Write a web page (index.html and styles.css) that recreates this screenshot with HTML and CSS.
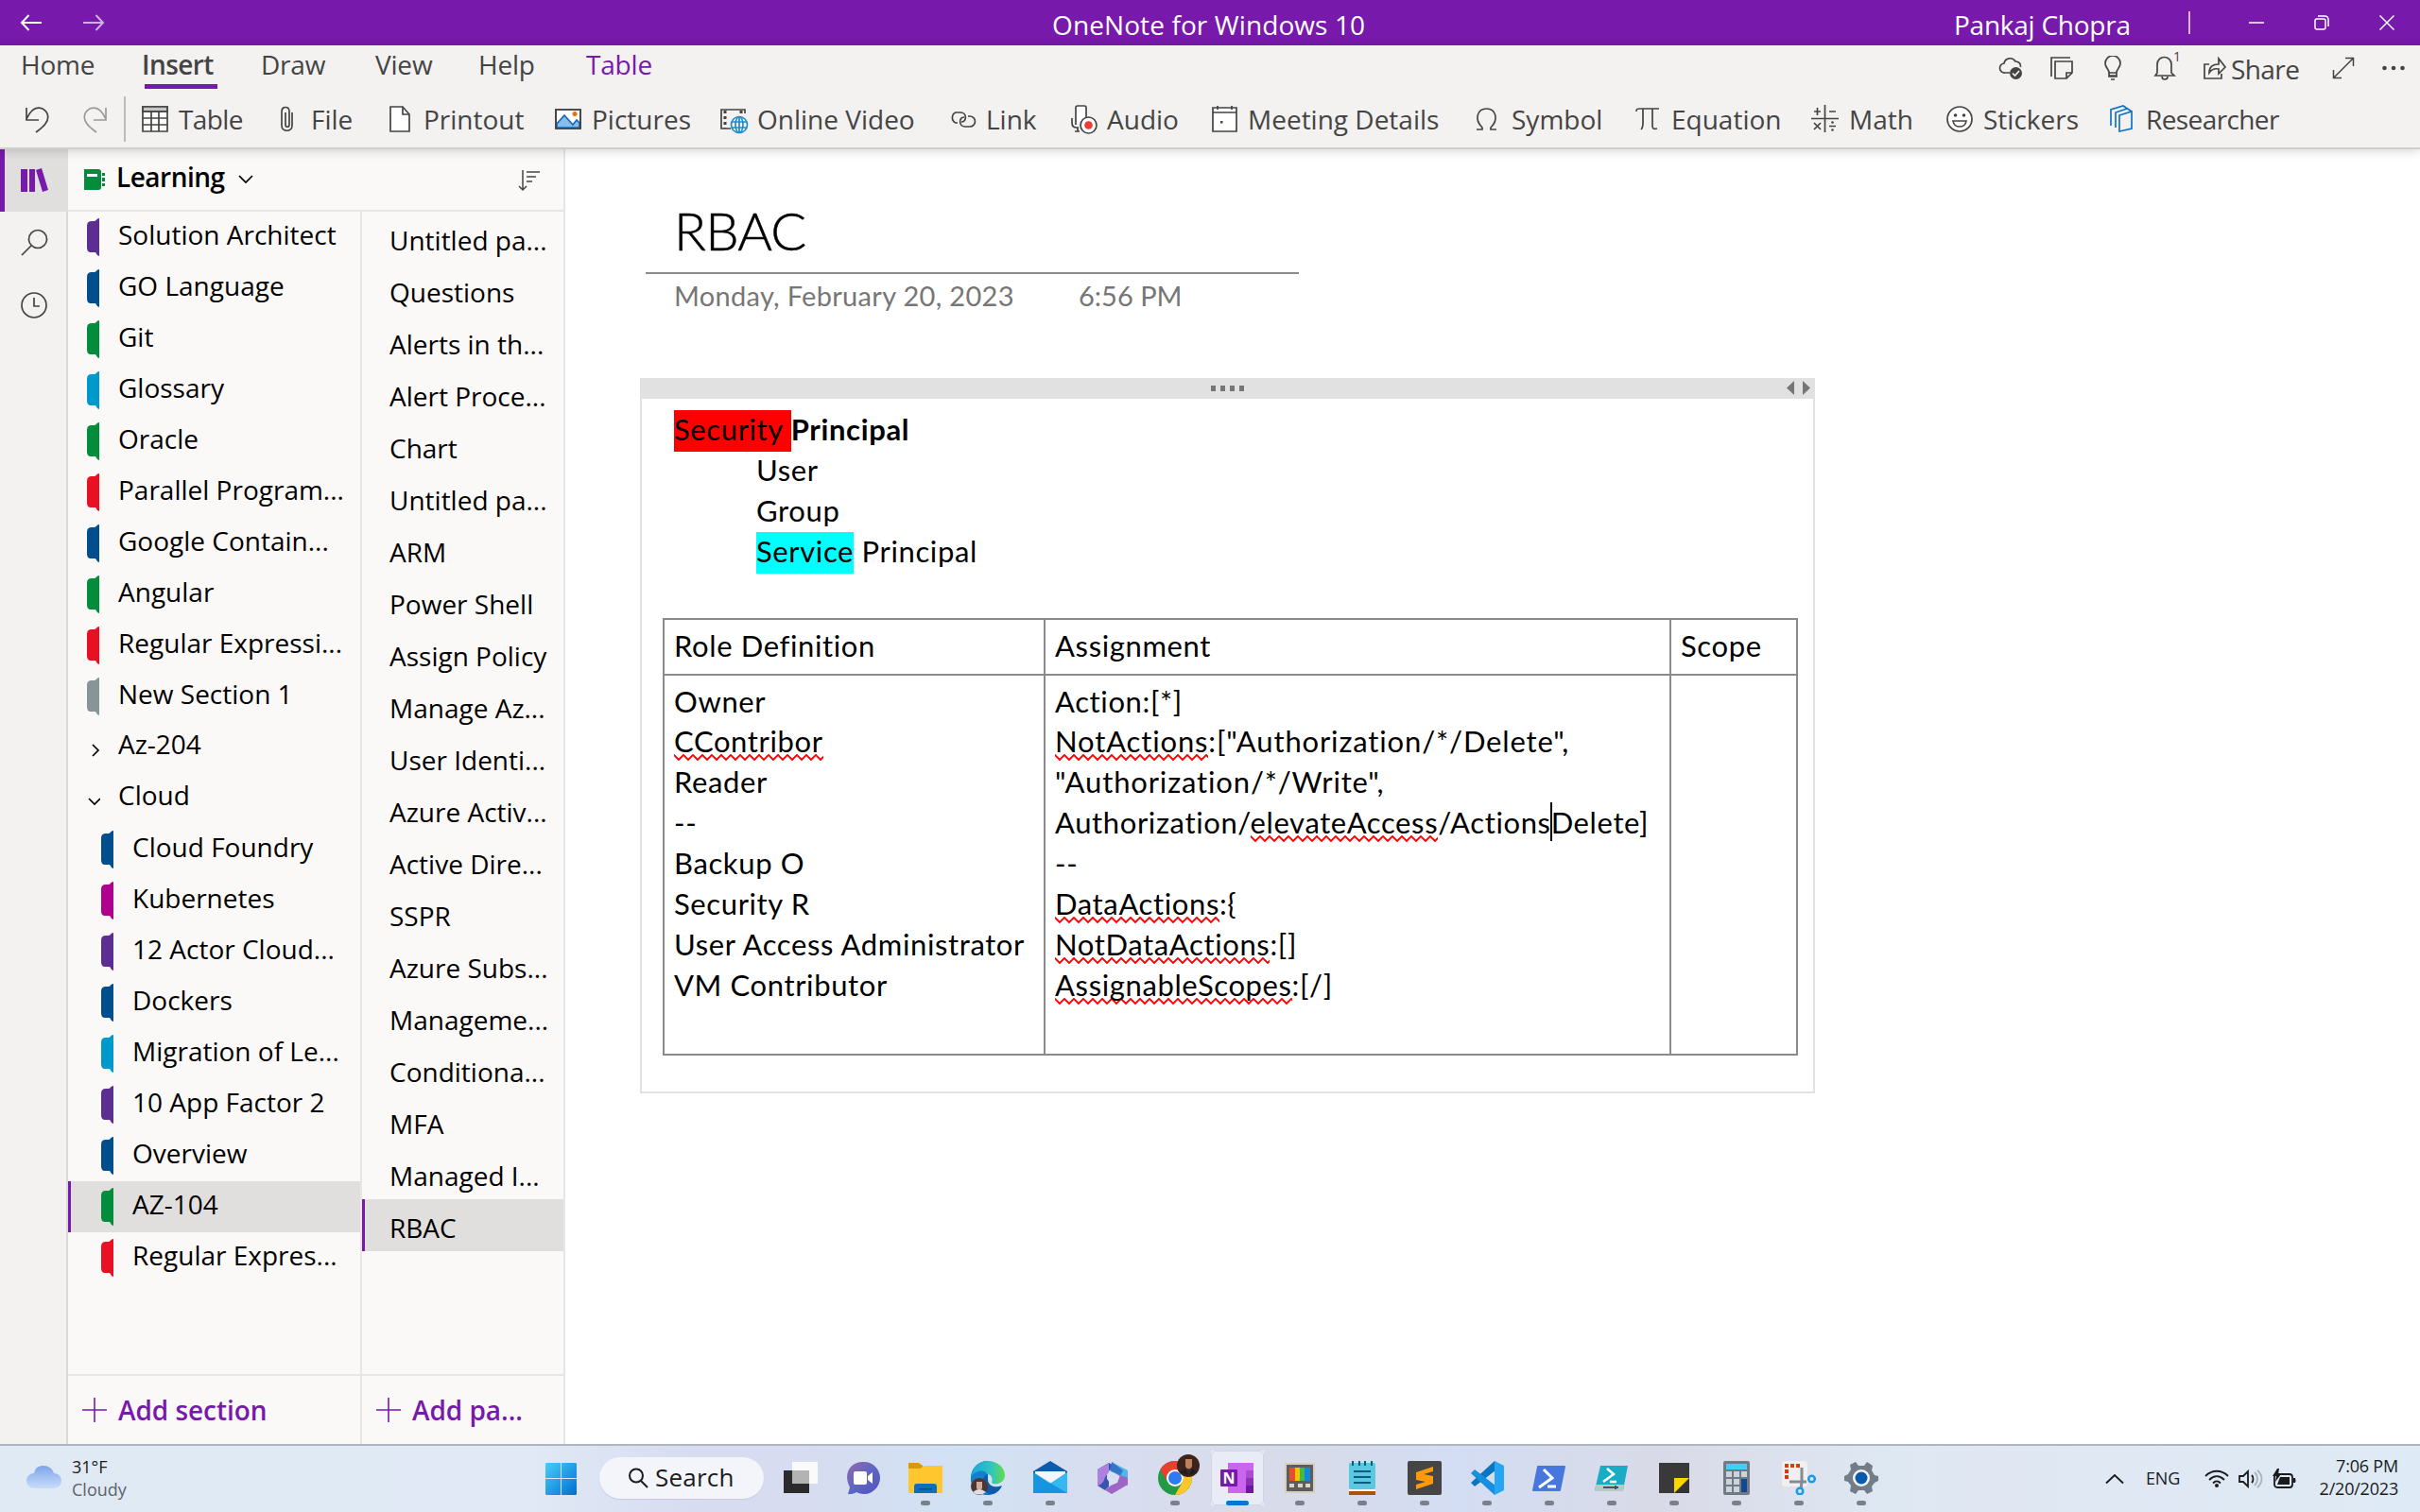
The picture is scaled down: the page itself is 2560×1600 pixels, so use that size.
FILE: index.html
```html
<!DOCTYPE html>
<html lang="en">
<head>
<meta charset="utf-8">
<title>OneNote for Windows 10</title>
<link rel="stylesheet" href="styles.css">
</head>
<body>
<header class="titlebar">
  <nav class="history">
    <svg class="i24" viewBox="0 0 24 24"><path d="M23 12H2M9.500 4 2 12l7.500 8"/></svg>
    <svg class="i24 dim" viewBox="0 0 24 24"><path d="M1 12h21M14.500 4l7.500 8-7.500 8"/></svg>
  </nav>
  <div class="app-title">OneNote for Windows 10</div>
  <div class="account">Pankaj Chopra</div>
  <div class="divider"></div>
  <div class="window-buttons">
    <svg viewBox="0 0 16 16"><path d="M0 8h16"/></svg>
    <svg viewBox="0 0 16 16"><rect x="1" y="4" width="11" height="11" rx="2"/><path d="M4 1h7.500a3.500 3.500 0 0 1 3.500 3.500V12"/></svg>
    <svg viewBox="0 0 16 16"><path d="M.5.5l15 15M15.500.5l-15 15"/></svg>
  </div>
</header>

<section class="ribbon">
  <div class="tab-row">
    <nav class="tabs">
      <span>Home</span><span class="current">Insert</span><span>Draw</span><span>View</span><span>Help</span><span class="context">Table</span>
    </nav>
    <div class="quick">
      <svg class="q-cloud" viewBox="0 0 26 26"><path d="M12 18H7a5 5 0 0 1-1-10 6.500 6.500 0 0 1 12-2c4 0 6 3 5.500 6"/><circle cx="18.500" cy="18.500" r="6.500" class="solid"/><path class="tick" d="M15 18.500l2.500 2.500 4.500-5"/></svg>
      <svg class="q-note" viewBox="0 0 26 26"><path d="M2 22V2h20M6 6h18v12l-6 6H6zM18 24v-6h6"/></svg>
      <svg class="q-bulb" viewBox="0 0 26 26"><path d="M9 18c0-4-4-5-4-10a8 8 0 0 1 16 0c0 5-4 6-4 10zM9 21h8M11 25h4M9 18v4h8v-4"/></svg>
      <svg class="q-bell" viewBox="0 0 26 26"><path d="M3 21l2-3V9a7.500 7.500 0 0 1 15 0v9l3 3zM10 22a3 3 0 0 0 6 0"/></svg><sup>1</sup>
      <svg class="q-share" viewBox="0 0 26 26"><path d="M7 9H2v15h18v-5M7 18c0-6 4-9 10-9V3l7 9-7 7v-5c-5-1-8 1-10 4z"/></svg>
      <span class="share">Share</span>
      <svg class="q-expand" viewBox="0 0 26 26"><path d="M3 23L23 3M15 2.500h8.500V11M2.500 15v8.500H11" stroke-width="1.500"/></svg>
      <svg class="q-more" viewBox="0 0 26 26"><g class="solid"><circle cx="3.500" cy="13" r="2.300"/><circle cx="13" cy="13" r="2.300"/><circle cx="22.500" cy="13" r="2.300"/></g></svg>
    </div>
  </div>
  <div class="tools">
    <svg class="undo" viewBox="0 0 32 32"><path d="M5 4v13h13M5 16C9 7 15 2 22 5c7 4 7 11 3 16-3 4-6 6-10 9"/></svg>
    <svg class="undo redo" viewBox="0 0 32 32"><path d="M27 4v13H14M27 16C23 7 17 2 10 5c-7 4-7 11-3 16 3 4 6 6 10 9"/></svg>
    <i class="tool-divider"></i>
    <span class="tool tight"><svg viewBox="0 0 32 32"><path fill="#fff" d="M3 3h26v26H3z"/><path fill="#c8c6c4" d="M3 3h26v5H3z"/><path d="M3 8h26M3 15h26M3 22h26M12 8v21M20 8v21"/></svg>Table</span>
    <span class="tool"><svg viewBox="0 0 32 32"><path d="M21 9v14c0 7-11 7-11 0V8c0-6 8-6 8 0v14c0 3-4 3-4 0V9"/></svg>File</span>
    <span class="tool"><svg viewBox="0 0 32 32"><path fill="#fff" d="M6 3h13l7 8v18H6z"/><path d="M19 3v8h7"/></svg>Printout</span>
    <span class="tool"><svg viewBox="0 0 32 32"><path fill="#fff" d="M3 6h26v20H3z"/><path d="M4 21l8-9 9 10 4-5 3 3v5H4z" fill="#83beec" stroke="#1568b8"/><circle cx="23" cy="10.500" r="2.500" fill="#e8710a" stroke="none"/><path d="M3 6h26v20H3z"/></svg>Pictures</span>
    <span class="tool"><svg viewBox="0 0 32 32"><path d="M28 10V6H3v20h10"/><path d="M7 7v19M24 7v4" stroke-dasharray="3 3" stroke-width="3"/><g stroke="#1e8bcd"><circle cx="22" cy="22" r="8.500" fill="#fff"/><ellipse cx="22" cy="22" rx="4" ry="8.500"/><path d="M22 13v18M14 19h16M14 25h16"/></g></svg>Online Video</span>
    <span class="tool"><svg viewBox="0 0 32 32"><path d="M11 20H9A6 6 0 0 1 9 9h5c7 0 7 10 1 10M22 13h2a5.500 5.500 0 0 1 0 11h-5c-7 0-7-10-1-10"/></svg>Link</span>
    <span class="tool"><svg viewBox="0 0 32 32"><path fill="#fff" d="M8 22V4c0-1 1-2 2-2h7c1 0 2 1 2 2v10"/><path d="M4 15v5c0 3 2 5 5 5h2M10 25v4M7 29h5"/><circle cx="21.500" cy="22.500" r="8.500" fill="#fff"/><circle cx="21.500" cy="22.500" r="4.300" fill="#f03a32" stroke="none"/></svg>Audio</span>
    <span class="tool"><svg viewBox="0 0 32 32"><path fill="#fff" d="M4 4h25v25H4z"/><path d="M4 9h25M9 2v4M24 2v4"/><path class="solid" d="M12 18h2.500v2.500H12z"/></svg>Meeting Details</span>
    <span class="tool"><svg viewBox="0 0 32 32"><path d="M4 27h6v-2C1 16 5 5 14.500 5S28 16 19 25v2h6"/></svg>Symbol</span>
    <span class="tool"><svg viewBox="0 0 32 32"><path d="M4 8c0-3 1-3 4-3h20M11 5v15c0 4-1 6-2 7M21 5v18c0 3 1 4 5 3"/></svg>Equation</span>
    <span class="tool"><svg viewBox="0 0 32 32"><path d="M15.500 1v29M1 15.500h29M7.500 4v8M4 8h7M20 8h7M4 20l7 7M11 20l-7 7M20 23.500h7"/><g class="solid"><circle cx="23.500" cy="19.500" r="1.300"/><circle cx="23.500" cy="27.500" r="1.300"/></g></svg>Math</span>
    <span class="tool"><svg viewBox="0 0 32 32"><circle cx="16" cy="16" r="13" fill="#fff"/><path d="M9 18h14c-1 8-13 8-14 0z"/><g class="solid"><circle cx="11.500" cy="12" r="1.800"/><circle cx="20.500" cy="12" r="1.800"/></g></svg>Stickers</span>
    <span class="tool tight"><svg viewBox="0 0 32 32" class="blue"><path d="M13 12l13-4v18l-13 3zM9 25V9l12-4M4 23V6l13-4 9 6"/></svg>Researcher</span>
  </div>
</section>

<main class="workspace">
  <aside class="rail">
    <div class="rail-item active"><svg viewBox="0 0 32 32"><path class="fill" d="M2 4h7v24H2zM11 4h6v24h-6zM18 5l6-2 7 23-6 2z"/></svg></div>
    <div class="rail-item"><svg viewBox="0 0 32 32"><circle cx="20" cy="12" r="9.500"/><path d="M13 19L3 29"/></svg></div>
    <div class="rail-item"><svg viewBox="0 0 32 32"><circle cx="16" cy="16" r="13"/><path d="M16 8v9h6"/></svg></div>
  </aside>
  <section class="navigator">
    <header class="notebook">
      <svg class="nb" viewBox="0 0 24 24"><path fill="#038c3c" d="M1 1h15q3 0 3 3v16q0 3-3 3H1z"/><path fill="#fff" d="M4 6h11v3H4z"/><path fill="#038c3c" d="M20 5h3v3h-3zM20 10h3v4h-3zM20 16h3v3h-3z"/></svg>
      <b>Learning</b>
      <svg class="chev" viewBox="0 0 16 10"><path d="M1 1l7 7 7-7"/></svg>
      <svg class="sort" viewBox="0 0 24 24"><path d="M5 1v21M1 18l4 4 4-4M9 3h14M9 8h10M9 13h6" stroke-width="1.500"/></svg>
    </header>
    <div class="lists">
      <div class="sections">
        <ul>
          <li class="purple"><svg viewBox="0 0 14 40"><use href="#tab"/></svg>Solution Architect</li>
          <li class="navy"><svg viewBox="0 0 14 40"><use href="#tab"/></svg>GO Language</li>
          <li class="green"><svg viewBox="0 0 14 40"><use href="#tab"/></svg>Git</li>
          <li class="cyan"><svg viewBox="0 0 14 40"><use href="#tab"/></svg>Glossary</li>
          <li class="green"><svg viewBox="0 0 14 40"><use href="#tab"/></svg>Oracle</li>
          <li class="red"><svg viewBox="0 0 14 40"><use href="#tab"/></svg>Parallel Program...</li>
          <li class="navy"><svg viewBox="0 0 14 40"><use href="#tab"/></svg>Google Contain...</li>
          <li class="green"><svg viewBox="0 0 14 40"><use href="#tab"/></svg>Angular</li>
          <li class="red"><svg viewBox="0 0 14 40"><use href="#tab"/></svg>Regular Expressi...</li>
          <li class="grey"><svg viewBox="0 0 14 40"><use href="#tab"/></svg>New Section 1</li>
          <li class="group"><svg viewBox="0 0 14 40"><path d="M6 18l6 6-6 6"/></svg>Az-204</li>
          <li class="group"><svg viewBox="0 0 14 40"><path d="M2 21l6 6 6-6"/></svg>Cloud</li>
          <li class="child navy"><svg viewBox="0 0 14 40"><use href="#tab"/></svg>Cloud Foundry</li>
          <li class="child magenta"><svg viewBox="0 0 14 40"><use href="#tab"/></svg>Kubernetes</li>
          <li class="child purple"><svg viewBox="0 0 14 40"><use href="#tab"/></svg>12 Actor Cloud...</li>
          <li class="child navy"><svg viewBox="0 0 14 40"><use href="#tab"/></svg>Dockers</li>
          <li class="child cyan"><svg viewBox="0 0 14 40"><use href="#tab"/></svg>Migration of Le...</li>
          <li class="child purple"><svg viewBox="0 0 14 40"><use href="#tab"/></svg>10 App Factor 2</li>
          <li class="child navy"><svg viewBox="0 0 14 40"><use href="#tab"/></svg>Overview</li>
          <li class="child green selected"><svg viewBox="0 0 14 40"><use href="#tab"/></svg>AZ-104</li>
          <li class="child red"><svg viewBox="0 0 14 40"><use href="#tab"/></svg>Regular Expres...</li>
        </ul>
        <div class="add"><svg viewBox="0 0 26 26"><path d="M13 0v26M0 13h26"/></svg>Add section</div>
      </div>
      <div class="pages">
        <ul>
          <li>Untitled pa...</li><li>Questions</li><li>Alerts in th...</li><li>Alert Proce...</li><li>Chart</li><li>Untitled pa...</li><li>ARM</li><li>Power Shell</li><li>Assign Policy</li><li>Manage Az...</li><li>User Identi...</li><li>Azure Activ...</li><li>Active Dire...</li><li>SSPR</li><li>Azure Subs...</li><li>Manageme...</li><li>Conditiona...</li><li>MFA</li><li>Managed I...</li><li class="selected">RBAC</li>
        </ul>
        <div class="add"><svg viewBox="0 0 26 26"><path d="M13 0v26M0 13h26"/></svg>Add pa...</div>
      </div>
    </div>
  </section>
  <article class="page">
    <h1>RBAC</h1>
    <p class="stamp"><span>Monday, February 20, 2023</span><span>6:56 PM</span></p>
    <div class="note">
      <div class="grip">
        <svg class="dots" viewBox="0 0 36 6"><path d="M0 0h5v6H0zM10 0h5v6h-5zM20 0h5v6h-5zM30 0h5v6h-5z"/></svg>
        <svg class="arrows" viewBox="0 0 24 16"><path d="M8 0v15L0 7.500zM17 0v15l8-7.500z"/></svg>
      </div>
      <div class="note-body">
        <p><span class="hl-red">Security </span><strong>Principal</strong></p>
        <p class="indent">User</p>
        <p class="indent">Group</p>
        <p class="indent"><span class="hl-cyan">Service</span> Principal</p>
        <div class="grid">
          <div>Role Definition</div>
          <div>Assignment</div>
          <div>Scope</div>
          <div>
            <p>Owner</p><p><u>CContribor</u></p><p>Reader</p><p>--</p><p>Backup O</p><p>Security R</p><p>User Access Administrator</p><p>VM Contributor</p>
          </div>
          <div>
            <p>Action:[*]</p><p class="wide"><u>NotActions</u>:["Authorization/*/Delete",</p><p class="wide">"Authorization/*/Write",</p><p>Authorization/<u>elevateAccess</u>/Actions<i class="caret"></i>Delete]</p><p>--</p><p><u>DataActions</u>:{</p><p><u>NotDataActions</u>:[]</p><p><u>AssignableScopes</u>:[/]</p>
          </div>
          <div></div>
        </div>
      </div>
    </div>
  </article>
</main>

<footer class="taskbar">
  <div class="weather">
    <svg viewBox="0 0 38 26"><defs><linearGradient id="cl" x1="0" y1="0" x2="0" y2="1"><stop offset="0" stop-color="#7da6ea"/><stop offset="1" stop-color="#c9dcfa"/></linearGradient></defs><path fill="url(#cl)" d="M8 25a8 8 0 0 1 0-16C9 3 13 1 18 1s10 3 11 8c5 0 8 4 8 8s-3 8-8 8z"/></svg>
    <div>31°F<br><span>Cloudy</span></div>
  </div>
  <div class="apps">
    <svg class="start" viewBox="0 0 36 36"><defs><linearGradient id="wn" x1="0" y1="0" x2="1" y2="1"><stop offset="0" stop-color="#47cdfb"/><stop offset="1" stop-color="#006fd0"/></linearGradient></defs><path fill="url(#wn)" d="M2 1h15v16H1V2zM18 1h15l1 1v15H18zM1 18h16v17H2l-1-1zM18 18h16v16l-1 1H18z"/></svg>
    <div class="search"><svg viewBox="0 0 22 22"><circle cx="9" cy="8.500" r="7"/><path d="M14 14l7 7"/></svg>Search</div>
    <div class="app"><svg viewBox="0 0 36 36"><path fill="#2b2b2b" d="M0 10h27v24H0z"/><path fill="#fafafa" d="M9 1h27v23H9z"/><path fill="#b3b3b3" d="M9 10h18v14H9z"/></svg></div>
    <div class="app"><svg viewBox="0 0 36 36"><defs><linearGradient id="ch" x1="0" y1="0" x2="1" y2="1"><stop offset="0" stop-color="#9667a8"/><stop offset=".5" stop-color="#5e67c5"/><stop offset="1" stop-color="#5250bd"/></linearGradient></defs><path fill="url(#ch)" d="M18 1a17 17 0 1 1-7 32c-3 2-6 2-9 2l2-7C-3 15 3 1 18 1z"/><rect x="8" y="11" width="14" height="14" rx="2" fill="#fff"/><path fill="#fff" d="M23 16l5-4v12l-5-4z"/></svg></div>
    <div class="app on"><svg viewBox="0 0 36 36"><path fill="#d99a09" d="M0 3q0-1 1-1h10l4 3v5H0z"/><path fill="#ffc62e" d="M0 8h13l3-3h20v29H0z"/><path fill="#0b70ba" d="M6 34V27q0-3 3-3h18q3 0 3 3v7z"/><path fill="#074d8b" d="M11 29h14v1.500H11z"/></svg></div>
    <div class="app on"><svg viewBox="0 0 36 36"><defs><linearGradient id="ed"><stop offset="0" stop-color="#16a7dc"/><stop offset=".6" stop-color="#32c5bd"/><stop offset="1" stop-color="#61dc4b"/></linearGradient></defs><path fill="#0c5cab" d="M18 0a18 18 0 0 0 0 36c7 0 13-4 15-10-7 3-15 1-15-7z"/><path fill="url(#ed)" d="M0 17C2 5 9 0 18 0c10 0 18 7 18 15 0 9-11 11-14 8 2-5-1-9-5-9-6 0-9 4-17 3z"/><path fill="#137fd1" d="M0 17c8-10 17-6 17-3-8 5-5 18 3 21C8 37 0 29 0 17z"/><circle cx="9" cy="27" r="9" fill="#4c3733"/><path fill="#d5aa98" d="M6 22h6v7q-3 4-6 0z"/><path fill="#e5dde3" d="M2 33q7-6 14 0-7 5-14 0z"/></svg></div>
    <div class="app on"><svg viewBox="0 0 36 36"><path fill="#0b5cab" d="M0 11L18 0l18 11v9H0z"/><path fill="#f3f6fc" d="M2 11h32v12H2z"/><path fill="#1799e6" d="M0 12l18 12L36 12v22H0z"/><path fill="#35b9ef" d="M18 24l18-12v22z" /><path fill="#1593df" d="M18 23l18 11H0V12z" opacity=".65"/></svg></div>
    <div class="app"><svg viewBox="0 0 36 36"><path fill="#3756b0" d="M14 2L2 9v17l8 5 4-4v-6l-2-2v-6l7-8z"/><path fill="#ae80df" d="M14 2L2 9v17c5-1 7-5 8-9l4-5z"/><path fill="#4fb7ec" d="M17 1l17 9v16l-8-5V14l-10-3z"/><path fill="#2c67bf" d="M17 1l12 9-3 6-11-6z" opacity=".8"/><path fill="#9d65c5" d="M2 26l15 9 17-10v-7l-8-3-3 8-7 3-6 5z"/><circle cx="18" cy="18" r="5.500" fill="#d8dff2"/></svg></div>
    <div class="app on"><svg viewBox="0 0 36 36" class="spill"><circle cx="18" cy="18" r="18" fill="#249a47"/><path fill="#e8402f" d="M2.400 9A18 18 0 0 1 33.600 9H18a9 9 0 0 0-8 13z"/><path fill="#ffc627" d="M33.600 9A18 18 0 0 1 18 36l8-14a9 9 0 0 0-8-13z"/><circle cx="18" cy="18" r="9" fill="#fff"/><circle cx="18" cy="18" r="7" fill="#2f7af0"/><circle cx="32" cy="5" r="12" fill="#3d241b"/><path fill="#bd815c" d="M29-2h7v8q-3.500 5-7 0z"/><path fill="#1a1d27" d="M23 12l6-4 3 7zM41 12l-5-4-3 7z"/></svg></div>
    <div class="app current on"><svg viewBox="0 0 36 36"><path fill="#c966ed" d="M8 2h27v32H8z"/><path fill="#a94bd5" d="M27 10h8v8h-8z"/><path fill="#8c31b8" d="M27 18h8v8h-8z"/><path fill="#6c18a0" d="M27 26h8v8h-8z"/><rect y="9" width="18" height="18" rx="1" fill="#7719aa"/><text x="9" y="23.500" text-anchor="middle" class="n">N</text></svg></div>
    <div class="app on"><svg viewBox="0 0 36 36"><path fill="#d8ceb9" d="M2 2h32v32H2z"/><path fill="#5c5d60" d="M4 4h28v28H4z"/><path fill="#e5502b" d="M7 7h6v14H7z"/><path fill="#f6c500" d="M13 7h5v14h-5z"/><path fill="#3dbc48" d="M18 7h5v14h-5z"/><path fill="#1686d6" d="M23 7h6v14h-6z"/><path fill="#ddd4c2" d="M7 24h5v4H7zM16 24h5v4h-5zM24 24h5v4h-5z"/></svg></div>
    <div class="app on"><svg viewBox="0 0 36 36"><path fill="#a9530f" d="M4 31h28v5H4z"/><path fill="#fff" d="M4 30h28v2H4z"/><rect x="4" y="2" width="28" height="28" rx="2" fill="#5bc8e1"/><path stroke="#075c7e" stroke-width="2" d="M9 11h18M9 17h18M9 23h18M8 0v5M15 0v5M21 0v5M28 0v5"/></svg></div>
    <div class="app on"><svg viewBox="0 0 36 36"><rect width="36" height="36" rx="2" fill="#454545"/><path fill="#ff9a0b" d="M27 6L9 12v8l10 2-10 3v5l18-6v-8l-10-2 10-3z"/></svg></div>
    <div class="app on"><svg viewBox="0 0 36 36"><path fill="#0b76be" d="M26 0L1 23l4 4L27 10z"/><path fill="#168fdc" d="M5 9l-4 4 25 23 1-10z"/><path fill="#27a6f3" d="M26 0l10 5v26l-10 5z"/></svg></div>
    <div class="app on"><svg viewBox="0 0 36 36"><path fill="#4777dc" d="M6 5h28q1 0 1 1l-5 25q0 1-1 1H1q-1 0-1-1L5 6q0-1 1-1z"/><path fill="none" stroke="#fff" stroke-width="3" d="M12 9l9 9-14 10M16 27h9"/></svg></div>
    <div class="app on"><svg viewBox="0 0 36 36"><path fill="#19acc5" d="M6 5h29l-5 26H0z"/><path fill="#b6c8ca" d="M1 25h30l-1 7H0z"/><path fill="none" stroke="#fff" stroke-width="2.500" d="M13 8l7 6-11 8M16 22h7"/><path stroke="#40565a" d="M9 28h16M22 26v4"/></svg></div>
    <div class="app on"><svg viewBox="0 0 36 36"><path fill="#393939" d="M2 2h32v32H2z"/><path fill="#333" d="M34 18v16H18z"/><path fill="#ffd500" d="M18 18h16L18 34z"/></svg></div>
    <div class="app on"><svg viewBox="0 0 36 36"><rect x="4" width="28" height="36" rx="2" fill="#707a85"/><path fill="#42d0fb" d="M7 3h22v6H7z"/><path fill="#ccd3dd" d="M7 11h6v6H7zM15 11h6v6h-6zM23 11h6v6h-6zM7 19h6v6H7zM15 19h6v6h-6zM7 27h6v6H7zM15 27h6v6h-6z"/><path fill="#13478e" d="M23 19h6v14h-6z"/></svg></div>
    <div class="app on"><svg viewBox="0 0 36 36"><rect width="27" height="27" rx="3" fill="#f1eff0"/><path fill="none" stroke="#d83b13" stroke-width="4" stroke-dasharray="4 2" d="M3 5h17M5 9v11"/><path fill="none" stroke="#858b92" stroke-width="3" d="M8 22h18M21 7v15l-1 8"/><g fill="none" stroke="#199ce2" stroke-width="2.500"><circle cx="31.500" cy="19" r="3.300"/><circle cx="19" cy="32" r="3.300"/></g></svg></div>
    <div class="app on"><svg viewBox="0 0 36 36"><path fill="#727d87" d="M12 1l3 4h6l3-4 6 4-1 5 3 5 4 1v5l-4 2-3 4 1 5-6 3-3-4h-6l-3 4-6-3 1-6-3-4-4-1v-5l4-2 3-5-1-5z"/><circle cx="18" cy="18" r="9" fill="#f3f5f8"/><circle cx="18" cy="18" r="6.500" fill="#075aac"/></svg></div>
  </div>
  <div class="tray">
    <svg class="up" viewBox="0 0 20 12"><path d="M1 10.500L10 2l9 8.500"/></svg>
    <span class="lang">ENG</span>
    <svg class="net" viewBox="0 0 26 20"><path d="M1 7c7-7 17-7 24 0M5 11c5-5 11-5 16 0M9 14.500c3-3 5-3 8 0"/><circle cx="13" cy="17" r="2" class="ink"/></svg>
    <svg class="vol" viewBox="0 0 26 20"><path d="M1 7h4l5-5v16l-5-5H1zM14 6c2 2 2 6 0 8"/><path class="faint" d="M17 3c4 4 4 10 0 14M20 1c6 5 6 13 0 18"/></svg>
    <svg class="bat" viewBox="0 0 26 22"><rect x="2" y="6" width="19" height="14" rx="3"/><path class="ink" d="M8 9h10v8H5zM22 10h2q1 3 0 5h-2zM5 0L0 8h4l-1 6 6-8H6l1-6z"/></svg>
    <div class="clock">7:06 PM<br>2/20/2023</div>
  </div>
</footer>

<svg class="defs"><symbol id="tab" viewBox="0 0 14 40"><path d="M13 0v40c-2 0-3-3-4-4H4q-4 0-4-5V8q0-5 5-5h3c2 0 2-3 5-3z"/></symbol></svg>
</body>
</html>
```

FILE: styles.css
```css
* { box-sizing: border-box; }
body {
  margin: 0;
  width: 2560px;
  height: 1600px;
  overflow: hidden;
  display: flex;
  flex-direction: column;
  background: #fff;
  color: #000;
  font: 28px/1.3 "Open Sans", "Noto Sans", sans-serif;
  letter-spacing: 0;
  white-space: nowrap;
}
p, ul, h1 { margin: 0; padding: 0; list-style: none; }
svg { display: block; flex: none; fill: none; stroke-width: 2; }
.defs { width: 0; height: 0; position: absolute; }

/* Title bar */
.titlebar {
  height: 48px;
  flex: none;
  display: grid;
  grid-template-columns: 1113px 954px 247px 65px 181px;
  align-items: center;
  background: #7719aa;
  color: #fff;
}
.titlebar svg { stroke: #fff; }
.history { display: flex; gap: 42px; padding-left: 21px; }
.i24 { width: 24px; height: 24px; }
.dim { opacity: .65; }
.app-title, .account { padding-top: 4px; }
.app-title { letter-spacing: .1px; }
.account { letter-spacing: -.25px; }
.divider { width: 2px; height: 24px; background: #d9b8e8; margin-left: 1px; }
.window-buttons { display: flex; gap: 53px; }
.window-buttons svg { width: 16px; height: 16px; stroke-width: 1.5; }

/* Ribbon */
.ribbon {
  height: 110px;
  flex: none;
  background: #f3f2f1;
  border-bottom: 2px solid #d0cecc;
  color: #444;
  box-shadow: 0 2px 10px rgba(0, 0, 0, .16);
  position: relative;
}
.ribbon svg { stroke: #444; }
.ribbon .solid { fill: #444; stroke: none; }
.ribbon .blue { stroke: #1173c7; }
.ribbon .tick { stroke: #f3f2f1; }
.tab-row { height: 48px; display: flex; justify-content: space-between; }
.tabs {
  display: grid;
  grid-template-columns: 128px 126px 121px 109px 114px 90px;
  line-height: 40px;
  padding-left: 22px;
  letter-spacing: -.2px;
}
.tabs .current { font-weight: 600; letter-spacing: -.6px; }
.tabs .current::after { content: ""; display: block; width: 77px; height: 5px; margin: 1px 0 0 3px; background: #7719aa; }
.tabs .context { color: #7719aa; }
.quick { display: flex; height: 48px; padding-right: 15px; align-items: center; }
.quick svg { width: 26px; height: 26px; stroke-width: 1.7; }
.q-note { margin-left: 28px; }
.q-bulb { margin-left: 28px; }
.q-bell { margin-left: 29px; }
.quick sup { font-size: 14px; line-height: 14px; height: 14px; margin: -24px 0 0 -4px; width: 8px; }
.q-share { margin-left: 23px; }
.share { margin: 2px 0 0 4px; width: 72px; letter-spacing: -.6px; }
.q-expand { margin-left: 34px; }
.q-more { margin-left: 27px; }
.tools {
  height: 60px;
  display: grid;
  grid-template-columns: 62px 46px 17px 140px 119px 178px 175px 242px 128px 149px 279px 169px 188px 142px 172px 200px;
  align-items: center;
  padding-left: 23px;
}
.tools svg { width: 32px; height: 32px; stroke-width: 1.7; }
.tool { display: flex; align-items: center; gap: 9px; }
.tool.tight { letter-spacing: -.6px; }
.tools .redo { opacity: .5; }
.tool-divider { width: 2px; height: 48px; background: #bdbbb9; }

/* Navigation */
.workspace { height: 1370px; flex: none; display: flex; }
.rail { width: 72px; background: #f3f2f1; border-right: 2px solid #dddbda; }
.rail-item { height: 66px; display: flex; align-items: center; padding-left: 20px; }
.rail-item svg { width: 32px; height: 32px; stroke: #444; stroke-width: 1.7; }
.rail-item .fill { fill: #7719aa; stroke: none; }
.rail-item.active { background: #e0dfde; border-left: 5px solid #7719aa; padding-left: 15px; margin-right: -2px; }
.navigator { width: 526px; background: #faf9f8; border-right: 2px solid #e8e6e5; display: flex; flex-direction: column; }
.notebook { height: 66px; flex: none; display: flex; align-items: center; border-bottom: 2px solid #e8e6e5; padding: 0 24px 6px 16px; }
.notebook b { font-weight: 600; margin-left: 11px; width: 129px; letter-spacing: -.5px; }
.nb { width: 24px; height: 24px; margin-top: 5px; }
.chev { width: 16px; height: 10px; stroke: #000; stroke-width: 1.7; margin-top: 6px; }
.sort { width: 24px; height: 24px; stroke: #444; margin: 8px 0 0 auto; }
.lists { flex: 1; display: flex; }
.sections, .pages { display: flex; flex-direction: column; justify-content: space-between; }
.sections { width: 311px; border-right: 2px solid #e8e6e5; }
.pages { width: 213px; }
.sections li { height: 54px; display: flex; align-items: center; padding: 0 0 6px 20px; }
.sections li svg { width: 14px; height: 40px; margin: 6px 19px 0 0; fill: currentColor; }
.sections li.child { padding-left: 35px; }
.sections li.group { padding-bottom: 8px; }
.sections li.group svg { fill: none; stroke: #000; stroke-width: 1.7; }
.sections li.selected { background: #e1dfdd; box-shadow: inset 3px 0 #7719aa; }
.sections .purple svg { color: #5c2e91; }
.sections .navy svg { color: #004e8c; }
.sections .green svg { color: #038c3c; }
.sections .cyan svg { color: #0099cc; }
.sections .red svg { color: #e81123; }
.sections .grey svg { color: #859599; }
.sections .magenta svg { color: #ae008c; }
.pages li { height: 55px; line-height: 55px; padding: 3px 0 0 29px; }
.pages li.selected { background: #e1dfdd; box-shadow: inset 3px 0 #7719aa; }
.add { height: 74px; border-top: 2px solid #e8e6e5; display: flex; align-items: center; gap: 12px; padding-left: 15px; color: #7719aa; font-weight: 600; letter-spacing: -.05px; }
.add svg { width: 26px; height: 26px; stroke: #7719aa; stroke-width: 1.6; }

/* Page */
.page { padding: 49px 0 0 79px; font-family: Lato, "Open Sans", sans-serif; letter-spacing: 0; }
.page h1 { width: 691px; height: 83px; margin-left: 6px; padding-left: 30px; border-bottom: 2px solid #8c8c8c; font-size: 56px; font-weight: 300; line-height: 74px; letter-spacing: -.8px; -webkit-text-stroke: .5px #000; }
.stamp { display: flex; margin-left: 36px; height: 110px; padding-top: 5px; line-height: 36px; font-size: 29px; color: #767676; }
.stamp span:first-child { width: 428px; letter-spacing: .3px; }
.note { width: 1243px; height: 757px; border: 2px solid #e1e1e1; border-top: 0; font-size: 31px; letter-spacing: .62px; }
.grip { height: 22px; background: #e1e1e1; margin: 0 -2px; display: grid; grid-template-columns: 604px 609px 30px; align-items: center; }
.grip svg { fill: #767676; }
.grip .dots { grid-column: 2; width: 36px; height: 6px; }
.grip .arrows { width: 24px; height: 16px; overflow: visible; }
.note-body { padding: 11px 0 0 22px; }
.note-body p { height: 42.9px; line-height: 42.9px; }
.note-body > p { padding-left: 12px; }
.note-body > .indent { padding-left: 99px; }
.hl-red, .hl-cyan { padding: 1px 0 5px; }
.hl-red { background: #f00; }
.hl-cyan { background: #0ff; }
.grid {
  margin-top: 49px;
  width: 1201px;
  display: grid;
  grid-template-columns: 403px 662px 134px;
  grid-template-rows: 59px 402px;
  border: solid #8a8a8a;
  border-width: 2px 0 0 2px;
  line-height: 42.9px;
}
.grid > div { border: solid #8a8a8a; border-width: 0 2px 2px 0; padding: 6px 0 0 10px; }
.grid .wide { letter-spacing: .85px; }
.grid u {
  text-decoration: none;
  padding-bottom: 2px;
  background: url("data:image/svg+xml,%3Csvg xmlns='http://www.w3.org/2000/svg' width='10' height='7'%3E%3Cpath d='M-1 0l6 6 6-6' fill='none' stroke='%23f00' stroke-width='1.900'/%3E%3C/svg%3E") left bottom repeat-x;
}
.caret { display: inline-block; width: 2px; height: 41px; background: #000; vertical-align: -10px; margin: -10px -1px; }
.caret { vertical-align: top; margin: 0 -1px; }

/* Taskbar */
.taskbar {
  height: 72px;
  flex: none;
  display: grid;
  grid-template-columns: 574px 1652px 334px;
  border-top: 2px solid #adb5bf;
  background: linear-gradient(90deg, #dfeaf4 0, #e0e9f5 560px, #d7dcf0 740px, #d7dcf0 850px, #d1e2f4 1020px, #d8ddef 1190px, #d8dbe9 1380px, #d3ddf3 1540px, #d9dae7 1760px, #dee8f3 2000px, #e0e7f3 2100px, #deeaf5 2560px);
  color: #1b1b1b;
}
.weather { display: flex; padding: 10px 0 0 28px; font-size: 18px; line-height: 24px; }
.weather svg { width: 38px; height: 26px; margin: 10px 10px 0 0; }
.weather span { color: #5d6268; }
.apps { display: flex; align-items: center; }
.start { width: 36px; height: 36px; margin-left: 2px; }
.search { width: 174px; height: 44px; margin: -2px 6px 0 22px; padding-left: 30px; border-radius: 22px; background: #f3f5fb; box-shadow: 0 1px 1px #c4cbe0; display: flex; align-items: center; gap: 7px; font-size: 26px; letter-spacing: .2px; }
.search svg { width: 22px; height: 22px; stroke: #1b1b1b; }
.app { width: 66px; height: 58px; display: flex; align-items: center; justify-content: center; position: relative; margin-top: -2px; }
.app svg { width: 36px; height: 36px; }
.app .spill { overflow: visible; }
.app.on::after { content: ""; position: absolute; bottom: 0; left: 28px; width: 10px; height: 5px; border-radius: 3px; background: #7b7f86; }
.app.current { background: #e9ecf6; background-clip: content-box; padding: 0 5px; }
.app.current::before { content: ""; position: absolute; inset: 0 5px; border-radius: 5px; border: 1px solid #d2d6e4; }
.app.current::after { left: 21px; width: 24px; background: #0078d4; }
.n { font: 700 16px "Open Sans", sans-serif; fill: #fff; letter-spacing: 0; }
.tray { display: flex; align-items: center; font-size: 18px; line-height: 24px; letter-spacing: -.2px; }
.tray svg { stroke: #1b1b1b; stroke-width: 1.8; }
.tray .ink { fill: #1b1b1b; stroke: none; }
.tray .faint { stroke: #a9b3bd; }
.up { width: 20px; height: 12px; margin-left: 1px; }
.lang { width: 35px; margin: -2px 0 0 23px; }
.net { width: 26px; height: 20px; margin-left: 27px; }
.vol { width: 26px; height: 20px; margin-left: 10px; }
.bat { width: 26px; height: 22px; margin-left: 10px; }
.clock { margin: -5px 23px 0 auto; text-align: right; }
```
